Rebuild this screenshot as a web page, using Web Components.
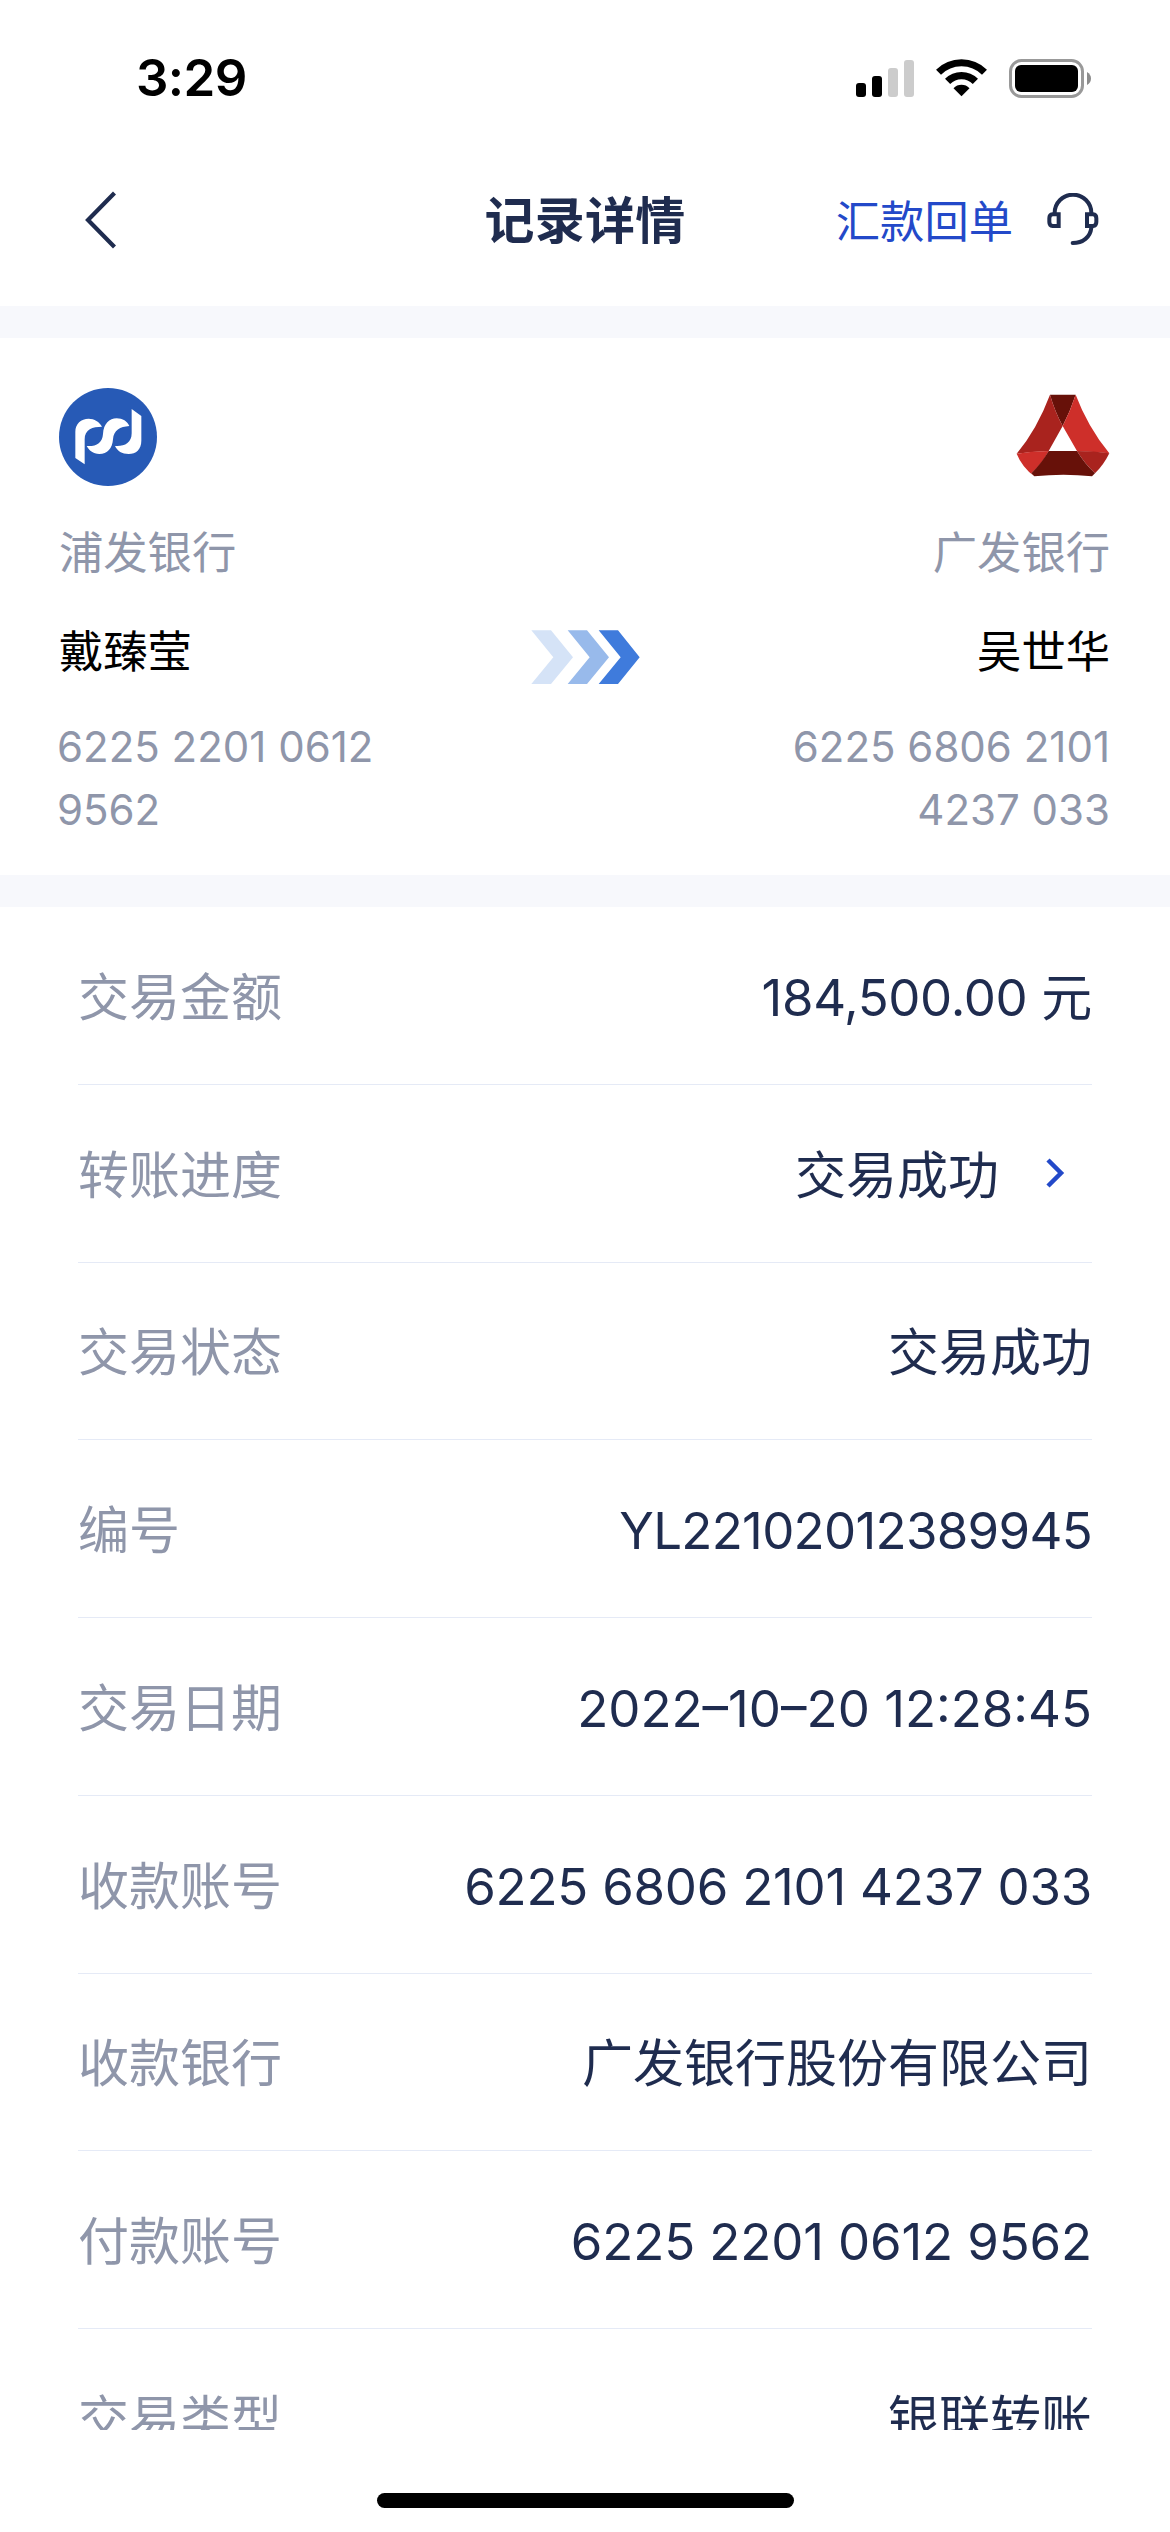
<!DOCTYPE html>
<html lang="zh-CN">
<head>
<meta charset="UTF-8">
<title>记录详情</title>
<style>
  html, body { margin: 0; padding: 0; }
  body {
    width: 1170px; height: 2532px; overflow: hidden; background: #fff;
    font-family: Inter, "Noto Sans CJK SC", sans-serif;
    color: #1f2c4f;
  }
</style>
</head>
<body>
<record-page>
  <status-bar time="3:29"></status-bar>
  <nav-bar heading="记录详情" action="汇款回单"></nav-bar>
  <transfer-card>
    <bank-party slot="from" bank="浦发银行" name="戴臻莹">
      <logo-spdb slot="logo"></logo-spdb>
      6225 2201 0612<br>9562
    </bank-party>
    <bank-party slot="to" bank="广发银行" name="吴世华" align="end">
      <logo-cgb slot="logo"></logo-cgb>
      6225 6806 2101<br>4237 033
    </bank-party>
  </transfer-card>
  <detail-list>
    <detail-row label="交易金额" tracking="-.35px">184,500.00 元</detail-row>
    <detail-row label="转账进度" link>交易成功</detail-row>
    <detail-row label="交易状态">交易成功</detail-row>
    <detail-row label="编号" tracking="-.7px">YL22102012389945</detail-row>
    <detail-row label="交易日期">2022–10–20 12:28:45</detail-row>
    <detail-row label="收款账号" tracking="-.25px">6225 6806 2101 4237 033</detail-row>
    <detail-row label="收款银行">广发银行股份有限公司</detail-row>
    <detail-row label="付款账号" tracking="-.15px">6225 2201 0612 9562</detail-row>
    <detail-row label="交易类型">银联转账</detail-row>
  </detail-list>
</record-page>

<script>
'use strict';

/** 各コンポーネント共通: open な shadow root に markup を流し込む */
function define(name, render) {
  customElements.define(name, class extends HTMLElement {
    connectedCallback() {
      if (this.shadowRoot) return;
      this.attachShadow({ mode: 'open' }).innerHTML = render(this);
    }
  });
}

/* ---- ページ全体 ---- */
define('record-page', () => `
  <style>
    :host { display: flex; flex-direction: column; width: 1170px; height: 2532px; background: #fff; }
    .home { flex: 1; display: flex; justify-content: center; align-items: flex-end; padding-bottom: 24px; }
    .home i { width: 417px; height: 15px; border-radius: 8px; background: #000; }
  </style>
  <slot></slot>
  <div class="home"><i></i></div>
`);

/* ---- ステータスバー ---- */
define('status-bar', el => `
  <style>
    :host {
      display: flex; justify-content: space-between; align-items: center;
      box-sizing: border-box; height: 134px; padding: 22px 79px 0 136px; color: #000;
    }
    .time { font-size: 51px; font-weight: 600; line-height: 60px; letter-spacing: -.6px; }
    .icons { display: flex; align-items: center; }
    svg { display: block; }
    .wifi { margin: 0 22px 0 22px; }
  </style>
  <span class="time">${el.getAttribute('time')}</span>
  <div class="icons">
    <svg width="58" height="37" viewBox="0 0 58 37">
      <rect x="0" y="23" width="10" height="14" rx="3"/>
      <rect x="16" y="16" width="10" height="21" rx="3"/>
      <rect x="32" y="8" width="10" height="29" rx="3" fill="#ccc"/>
      <rect x="48" y="0" width="10" height="37" rx="3" fill="#ccc"/>
    </svg>
    <svg class="wifi" width="51" height="37.3" viewBox="348.5 86 153 112">
      <path d="M356 126A97.5 97.5 0 0 1 494 126" fill="none" stroke="#000" stroke-width="21"/>
      <path d="M383.3 153.3A59 59 0 0 1 466.7 153.3" fill="none" stroke="#000" stroke-width="22"/>
      <path d="M425 198L401 174A33 33 0 0 1 449 174Z"/>
    </svg>
    <svg width="82" height="39" viewBox="0 0 82 39">
      <rect x="1.5" y="1.5" width="72" height="36" rx="11" fill="none" stroke="#999" stroke-width="3"/>
      <rect x="6" y="6" width="63" height="27" rx="6"/>
      <path d="M78 13Q82 15.500 82 19.500Q82 23.500 78 26Z" fill="#8c8c8c"/>
    </svg>
  </div>
`);

/* ---- ナビゲーションバー ---- */
define('nav-bar', el => `
  <style>
    :host {
      display: grid; grid-template-columns: 1fr auto 1fr; align-items: center;
      box-sizing: border-box; height: 172px; padding: 0 71px;
    }
    h1 { margin: 2px 0 0; font-size: 50px; font-weight: 600; line-height: 70px; letter-spacing: .3px; }
    .back { margin-left: 14px; }
    .right { display: flex; justify-content: flex-end; align-items: center; gap: 34px; }
    .action { margin-top: 3px; font-size: 44.300px; line-height: 64px; color: #2349c9; white-space: nowrap; }
    svg { display: block; }
  </style>
  <svg class="back" width="32" height="58" viewBox="0 0 32 58" fill="none" stroke="#1f2c4f" stroke-width="4.200">
    <path d="M29.500 2L3 29L29.500 56"/>
  </svg>
  <h1>${el.getAttribute('heading')}</h1>
  <div class="right">
    <span class="action">${el.getAttribute('action')}</span>
    <svg width="52" height="54" viewBox="683 486 156 162" fill="none" stroke="#1f2c4f" stroke-width="12" stroke-linecap="round">
      <path d="M706 548V546A55 55 0 0 1 816 546V548"/>
      <path d="M718 550H700Q690 551 690 562V573Q690 584 700 585H718Z" stroke-linecap="butt"/>
      <path d="M803 550H821Q831 551 831 562V573Q831 584 821 585H803Z" stroke-linecap="butt"/>
      <path d="M816 590C813 618 791 636 760 636"/>
    </svg>
  </div>
`);

/* ---- 振込元 → 振込先 ---- */
define('transfer-card', () => `
  <style>
    :host {
      display: flex; justify-content: space-between; box-sizing: border-box;
      height: 601px; padding: 50px 60px 0 59px;
      border: solid #f7f8fc; border-width: 32px 0;
    }
    ::slotted(*) { flex: 1 1 0; }
    .arrows { padding-top: 240px; }
    svg { display: block; }
  </style>
  <slot name="from"></slot>
  <div class="arrows">
    <svg width="112" height="58" viewBox="59 84 336 174">
      <path d="M66 91H125L191 171.500L125 252H66L132 171.500Z" fill="#d5e3f7"/>
      <path d="M175 91H233L299 171.500L233 252H175L241 171.500Z" fill="#98baeb"/>
      <path d="M268 91H326L391 171.500L326 252H268L334 171.500Z" fill="#3f7bdc"/>
    </svg>
  </div>
  <slot name="to"></slot>
`);

define('bank-party', el => `
  <style>
    :host { display: flex; flex-direction: column; align-items: flex-start; color: #8f96aa; }
    :host([align="end"]) { align-items: flex-end; text-align: right; }
    .logo { height: 98px; display: flex; align-items: center; }
    .bank { margin-top: 34px; font-size: 44.300px; line-height: 66px; }
    .name { margin-top: 33px; font-size: 44.300px; line-height: 66px; color: #000; }
    .no { margin: 30px 0 0 -2px; font-size: 42px; line-height: 63px; white-space: nowrap; }
  </style>
  <div class="logo"><slot name="logo"></slot></div>
  <div class="bank">${el.getAttribute('bank')}</div>
  <div class="name">${el.getAttribute('name')}</div>
  <div class="no"><slot></slot></div>
`);

define('logo-spdb', () => `
  <style>:host, svg { display: block; }</style>
  <svg width="98" height="98" viewBox="57 54 294 294">
    <circle cx="204" cy="201" r="147" fill="#275ab6"/>
    <g fill="#fff">
      <path d="M134 283L106 264V186C106 161 123 146 146 146C163 146 178 155 186 170C158 170 134 178 134 208Z"/>
      <path d="M140 228C168 230 187 220 189 192C191 161 208 145 230 145C248 145 262 154 268 168C240 170 221 180 219 208C217 236 202 252 178 252C159 252 147 241 140 228Z"/>
      <path d="M225 228C252 230 275 220 275 190V117L304 138V212C304 238 288 252 266 252C246 252 232 243 225 228Z"/>
    </g>
  </svg>
`);

define('logo-cgb', () => `
  <style>:host, svg { display: block; } :host { padding-bottom: 3px; }</style>
  <svg width="94" height="83" viewBox="47 74 282 249">
    <path d="M149 76H226Q210 125 187 170Q163 125 149 76Z" fill="#671109"/>
    <path d="M149 76Q163 125 187 170L145 245Q95 247 49 253Q110 180 149 76Z" fill="#a9231e"/>
    <path d="M226 76Q262 172 327 252Q280 247 230 245L187 170Q210 125 226 76Z" fill="#ce2f2a"/>
    <path d="M49 253Q95 245 145 245Q128 280 93 312L102 321Q65 293 49 253Z" fill="#ce2f2a"/>
    <path d="M230 245Q280 245 327 252Q310 287 284 312Q252 282 230 245Z" fill="#a9231e"/>
    <path d="M145 245H230Q252 282 284 312L275 321Q190 312 102 321L93 312Q125 280 145 245Z" fill="#671109"/>
  </svg>
`);

/* ---- 明細 ---- */
define('detail-list', () => `
  <style>
    :host { display: block; height: 1523px; padding: 0 78px; overflow: hidden; }
  </style>
  <slot></slot>
`);

define('detail-row', el => `
  <style>
    :host {
      display: flex; justify-content: space-between; align-items: center;
      box-sizing: border-box; height: 177.750px; padding-top: 5px;
      border-bottom: 1px solid #e5eaf6;
      font-size: 51px; line-height: 72px;
    }
    .label { color: #8f96aa; }
    .value {
      display: flex; align-items: center; white-space: nowrap;
      letter-spacing: ${el.getAttribute('tracking') || 'normal'};
    }
    svg { display: block; margin: -6px 27px 0 46px; }
  </style>
  <span class="label">${el.getAttribute('label')}</span>
  <span class="value"><slot></slot>${el.hasAttribute('link') ? `
    <svg width="20" height="32" viewBox="0 0 20 32" fill="none" stroke="#2349c9" stroke-width="4.500">
      <path d="M3 3L16 16L3 29"/>
    </svg>` : ''}</span>
`);
</script>
</body>
</html>
